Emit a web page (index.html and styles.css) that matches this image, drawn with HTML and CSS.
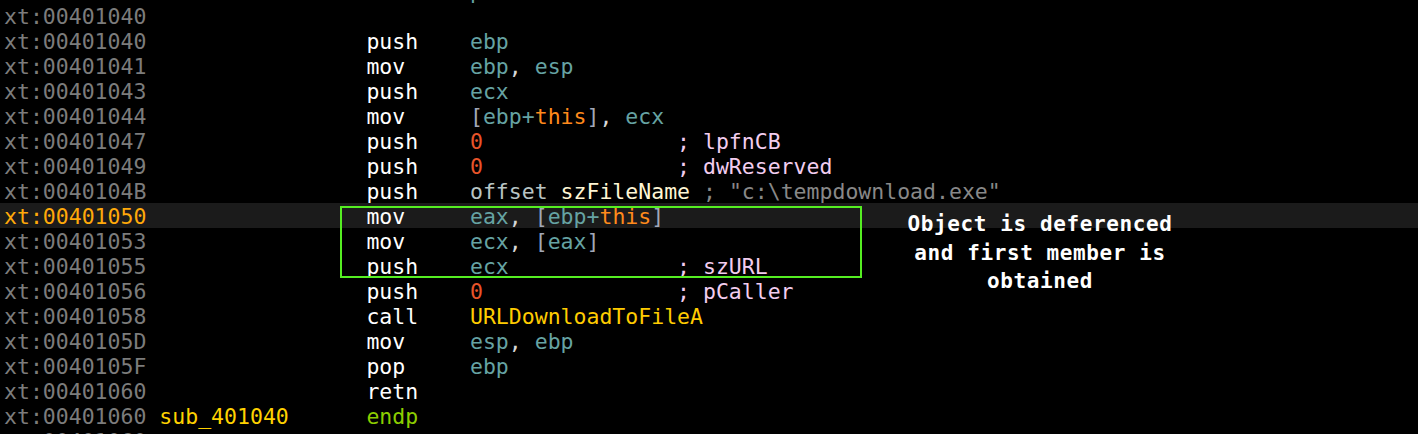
FILE: index.html
```html
<!DOCTYPE html>
<html>
<head>
<meta charset="utf-8">
<link rel="stylesheet" href="styles.css">
</head>
<body>
<div class="view">
  <div class="listing">
    <div class="row"><span class="addr">xt:00401040</span><span class="lbl"></span><span class="mn"></span><span class="op">proc near</span></div>
    <div class="row"><span class="addr">xt:00401040</span></div>
    <div class="row"><span class="addr">xt:00401040</span><span class="lbl"></span><span class="mn">push</span><span class="op"><span class="reg">ebp</span></span></div>
    <div class="row"><span class="addr">xt:00401041</span><span class="lbl"></span><span class="mn">mov</span><span class="op"><span class="reg">ebp</span><span class="pun">, </span><span class="reg">esp</span></span></div>
    <div class="row"><span class="addr">xt:00401043</span><span class="lbl"></span><span class="mn">push</span><span class="op"><span class="reg">ecx</span></span></div>
    <div class="row"><span class="addr">xt:00401044</span><span class="lbl"></span><span class="mn">mov</span><span class="op"><span class="brk">[</span><span class="reg">ebp+</span><span class="var">this</span><span class="brk">]</span><span class="pun">, </span><span class="reg">ecx</span></span></div>
    <div class="row"><span class="addr">xt:00401047</span><span class="lbl"></span><span class="mn">push</span><span class="op"><span class="num">0</span></span><span class="cmt">; lpfnCB</span></div>
    <div class="row"><span class="addr">xt:00401049</span><span class="lbl"></span><span class="mn">push</span><span class="op"><span class="num">0</span></span><span class="cmt">; dwReserved</span></div>
    <div class="row"><span class="addr">xt:0040104B</span><span class="lbl"></span><span class="mn">push</span><span class="op"><span class="kw">offset</span> <span class="sym">szFileName</span> </span><span class="str">; "c:\tempdownload.exe"</span></div>
    <div class="row current"><span class="addr">xt:00401050</span><span class="lbl"></span><span class="mn">mov</span><span class="op"><span class="reg">eax</span><span class="pun">, </span><span class="brk">[</span><span class="reg">ebp+</span><span class="var">this</span><span class="brk">]</span></span></div>
    <div class="row"><span class="addr">xt:00401053</span><span class="lbl"></span><span class="mn">mov</span><span class="op"><span class="reg">ecx</span><span class="pun">, </span><span class="brk">[</span><span class="reg">eax</span><span class="brk">]</span></span></div>
    <div class="row"><span class="addr">xt:00401055</span><span class="lbl"></span><span class="mn">push</span><span class="op"><span class="reg">ecx</span></span><span class="cmt">; szURL</span></div>
    <div class="row"><span class="addr">xt:00401056</span><span class="lbl"></span><span class="mn">push</span><span class="op"><span class="num">0</span></span><span class="cmt">; pCaller</span></div>
    <div class="row"><span class="addr">xt:00401058</span><span class="lbl"></span><span class="mn">call</span><span class="op"><span class="fn">URLDownloadToFileA</span></span></div>
    <div class="row"><span class="addr">xt:0040105D</span><span class="lbl"></span><span class="mn">mov</span><span class="op"><span class="reg">esp</span><span class="pun">, </span><span class="reg">ebp</span></span></div>
    <div class="row"><span class="addr">xt:0040105F</span><span class="lbl"></span><span class="mn">pop</span><span class="op"><span class="reg">ebp</span></span></div>
    <div class="row"><span class="addr">xt:00401060</span><span class="lbl"></span><span class="mn">retn</span></div>
    <div class="row"><span class="addr">xt:00401060</span><span class="lbl">sub_401040</span><span class="mn end">endp</span></div>
    <div class="row"><span class="addr">xt:00401060</span></div>
  </div>
  <div class="box"></div>
  <div class="note">Object is deferenced<br>and first member is<br>obtained</div>
</div>
</body>
</html>
```

FILE: styles.css
```css
html, body {
  margin: 0;
  padding: 0;
  background: #000;
  overflow: hidden;
}
.view {
  position: relative;
  width: 1418px;
  height: 434px;
  overflow: hidden;
  background: #000;
}
.listing {
  margin-top: -22px;
  font-family: "DejaVu Sans Mono", monospace;
  font-size: 21.5px;
  display: flex;
  flex-direction: column;
}
.row {
  height: 25px;
  line-height: 28px;
  padding-left: 4px;
  display: flex;
  white-space: pre;
}
.row.current {
  background: #1b1b1b;
}
.addr {
  width: 12ch;
  flex: none;
  color: #7c7c7c;
}
.current .addr {
  color: #ffa90a;
}
.lbl {
  width: 16ch;
  flex: none;
  color: #ffd200;
}
.mn {
  width: 8ch;
  flex: none;
  color: #ffffff;
}
.mn.end {
  color: #8ccd00;
}
.op {
  min-width: 16ch;
  flex: none;
  color: #66a3a3;
}
.reg { color: #66a3a3; }
.pun { color: #d8d8d8; }
.brk { color: #a2a8b8; }
.var { color: #ff8a1c; }
.num { color: #e8542a; }
.kw { color: #b8c4c4; }
.sym { color: #fff6d4; }
.fn { color: #ffcc00; }
.cmt { color: #f2cdef; }
.str { color: #888888; }

.box {
  position: absolute;
  left: 340px;
  top: 206px;
  width: 518px;
  height: 68px;
  border: 2px solid #55ee22;
}
.note {
  position: absolute;
  left: 877px;
  top: 210px;
  width: 326px;
  text-align: center;
  font-family: "DejaVu Sans Mono", monospace;
  font-weight: bold;
  font-size: 21px;
  letter-spacing: 0.6px;
  line-height: 28.5px;
  color: #ffffff;
}
```
